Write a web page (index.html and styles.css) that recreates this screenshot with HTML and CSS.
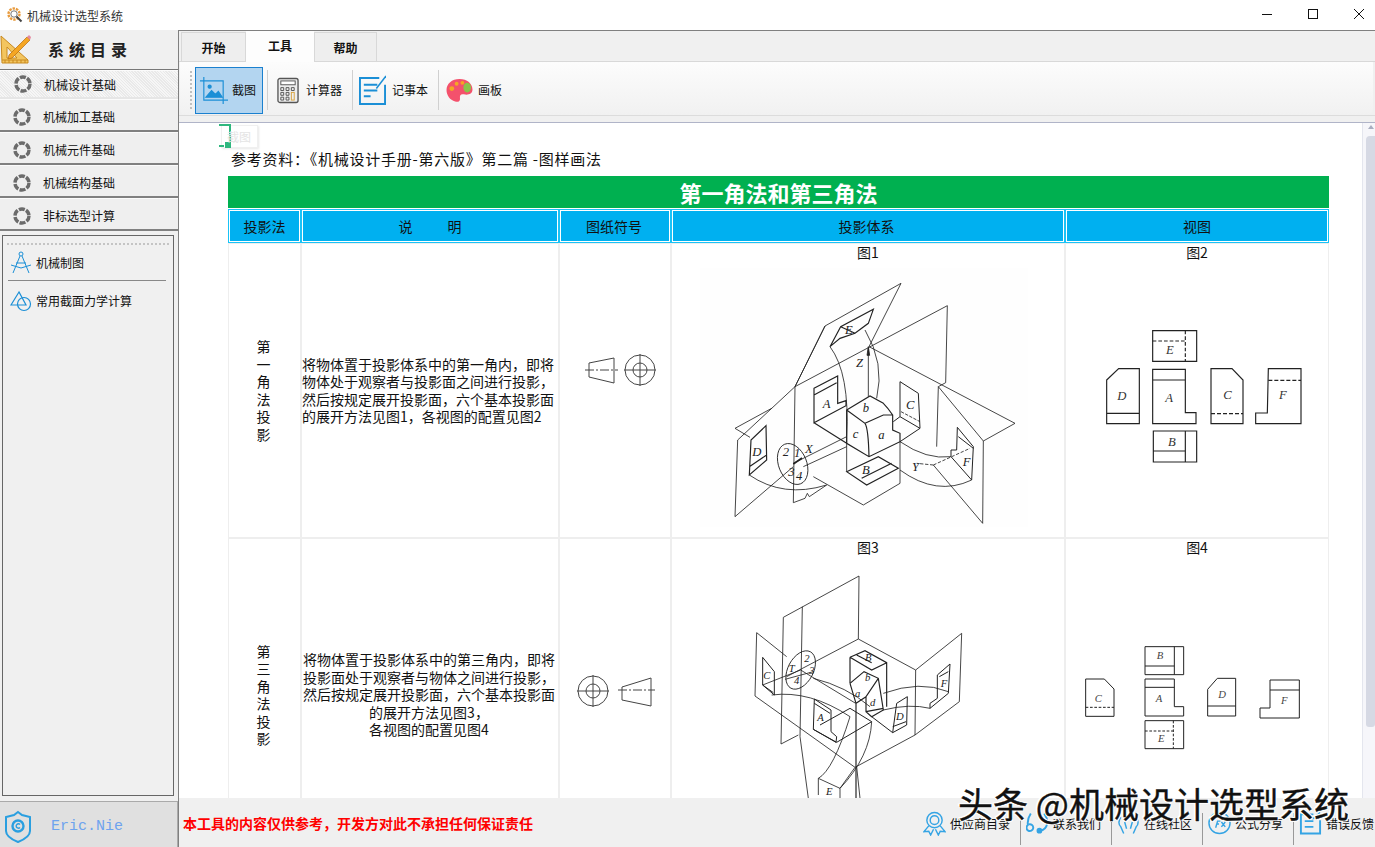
FILE: index.html
```html
<!DOCTYPE html>
<html lang="zh-CN">
<head>
    <meta charset="UTF-8">
    <title>机械设计选型系统</title>
    <link rel="stylesheet" href="styles.css">
</head>
<body>
    <div class="titlebar">
        <svg class="app-icon" viewBox="0 0 16 16">
            <circle cx="7" cy="7" r="5.5" fill="none" stroke="#e89a3c" stroke-width="2.4" stroke-dasharray="2.4 1"/>
            <circle cx="7" cy="7" r="3.2" fill="#fff" stroke="#777" stroke-width="1"/>
            <path d="M9.5 9.5l5 5" stroke="#444" stroke-width="2"/>
        </svg>
        <span class="app-title">机械设计选型系统</span>
        <div class="win-controls">
            <svg class="win-btn" viewBox="0 0 46 30"><path d="M25 14.5h10" stroke="#111" fill="none"/></svg>
            <svg class="win-btn" viewBox="0 0 46 30"><rect x="25.500" y="9.500" width="9" height="9" stroke="#111" fill="none"/></svg>
            <svg class="win-btn" viewBox="0 0 46 30"><path d="M25 9l10 10M35 9l-10 10" stroke="#111" fill="none"/></svg>
        </div>
    </div>

    <div class="app">
        <div class="sidebar">
            <div class="side-head">
                <svg class="side-logo" viewBox="0 0 32 32">
                    <path d="M1 3l27 24v3H2z" fill="#f3c55f" stroke="#c98a1f"/>
                    <path d="M7 14l10 11H7z" fill="#f0f0f0" stroke="#c98a1f"/>
                    <path d="M2 27h26M5 30v-3M9 30v-3M13 30v-3M17 30v-3M21 30v-3M25 30v-3" stroke="#c98a1f" fill="none"/>
                    <path d="M9 22L27 4l3 3-18 18-4 1z" fill="#f5a623" stroke="#b36b10" stroke-width=".7"/>
                    <path d="M27 4l2-2 2 2-1 3z" fill="#e58aa0"/>
                </svg>
                <span class="side-title">系统目录</span>
            </div>
            <div class="nav-item first"><svg class="ring" viewBox="0 0 18 18"><circle cx="9" cy="9" r="7" fill="none" stroke="#6b6b6b" stroke-width="3.4" stroke-dasharray="6 1.4"/></svg><span>机械设计基础</span></div>
            <div class="nav-item"><svg class="ring" viewBox="0 0 18 18"><circle cx="9" cy="9" r="7" fill="none" stroke="#6b6b6b" stroke-width="3.4" stroke-dasharray="6 1.4"/></svg><span>机械加工基础</span></div>
            <div class="nav-item"><svg class="ring" viewBox="0 0 18 18"><circle cx="9" cy="9" r="7" fill="none" stroke="#6b6b6b" stroke-width="3.4" stroke-dasharray="6 1.4"/></svg><span>机械元件基础</span></div>
            <div class="nav-item"><svg class="ring" viewBox="0 0 18 18"><circle cx="9" cy="9" r="7" fill="none" stroke="#6b6b6b" stroke-width="3.4" stroke-dasharray="6 1.4"/></svg><span>机械结构基础</span></div>
            <div class="nav-item"><svg class="ring" viewBox="0 0 18 18"><circle cx="9" cy="9" r="7" fill="none" stroke="#6b6b6b" stroke-width="3.4" stroke-dasharray="6 1.4"/></svg><span>非标选型计算</span></div>

            <div class="side-panel">
                <div class="panel-grip"></div>
                <div class="panel-row">
                    <svg class="panel-icon" viewBox="0 0 22 24" fill="none" stroke="#1b8fd6">
                        <circle cx="11" cy="4" r="2"/><path d="M10 6L3 23M12 6l7 17M1 15l10 3 10-3M6 13h10"/>
                    </svg>
                    <span>机械制图</span>
                </div>
                <div class="panel-line"></div>
                <div class="panel-row">
                    <svg class="panel-icon" viewBox="0 0 22 24" fill="none" stroke="#1b8fd6" stroke-width="1.2">
                        <path d="M9 4L1 17h15z"/><circle cx="14" cy="16" r="6.5"/>
                    </svg>
                    <span>常用截面力学计算</span>
                </div>
            </div>

            <div class="side-foot">
                <svg class="shield" viewBox="0 0 28 34" fill="none" stroke="#2a9fe0" stroke-width="2">
                    <path d="M14 2l4 3 8 2v14c0 6-7 9-12 11C9 30 2 27 2 21V7l8-2z"/>
                    <circle cx="14" cy="16" r="5.5" stroke-width="2.4"/><path d="M16 14.5a2.2 2.2 0 1 0 0 3" stroke-width="1.4"/>
                </svg>
                <span class="author">Eric.Nie</span>
            </div>
        </div>

        <div class="main">
            <div class="tabs">
                <div class="tab">开始</div>
                <div class="tab active">工具</div>
                <div class="tab">帮助</div>
            </div>

            <div class="toolbar">
                <div class="grip"></div>
                <div class="tool selected">
                    <svg class="icon-shot" viewBox="0 0 30 30" fill="none" stroke="#1b8fd6" stroke-width="1.2">
                        <path d="M5 1v24h28M1 5h24v24"/>
                        <path d="M7 22l6-7 4 4 3-3 4 6z" fill="#1b8fd6"/><circle cx="11" cy="11" r="1.6" fill="#1b8fd6"/>
                    </svg>
                    <span>截图</span>
                </div>
                <div class="tool calc">
                    <svg class="icon-calc" viewBox="0 0 23 28" fill="none" stroke="#555">
                        <rect x="1" y="1.500" width="21" height="25" rx="2" fill="#eee" stroke-width="1.4"/>
                        <rect x="4" y="4" width="15" height="4" fill="#fff"/>
                        <path d="M4 11h3v3H4zM9.500 11h3v3h-3zM15 11h3v3h-3zM4 16h3v3H4zM9.500 16h3v3h-3zM4 21h3v3H4zM9.500 21h3v3h-3z"/>
                        <rect x="15" y="16" width="3" height="8" stroke="#d9a441"/>
                    </svg>
                    <span>计算器</span>
                </div>
                <div class="tool note">
                    <svg class="icon-note" viewBox="0 0 28 32" fill="none" stroke="#1b8fd6" stroke-width="2">
                        <path d="M21 3H1v27h26V10M5 10h14M5 16h14M5 22h7"/><path d="M18 14L28 1" stroke-width="1.6"/>
                    </svg>
                    <span>记事本</span>
                </div>
                <div class="tool paint">
                    <svg class="icon-paint" viewBox="0 0 28 26">
                        <path d="M14 1c8 0 13.500 5 13.500 11 0 5-5 6-9 5-3-.8-4.500 1-4 4 .5 3-2 4.500-5 3.500C4 23 .5 18 .5 12.500.5 6 6 1 14 1z" fill="#f4516c"/>
                        <circle cx="6" cy="11" r="2.500" fill="#f5a623"/><circle cx="11" cy="6" r="2" fill="#f5a623"/>
                        <circle cx="17" cy="5" r="2" fill="#f5a623"/><ellipse cx="22" cy="10" rx="4" ry="5" fill="#8bc34a"/>
                    </svg>
                    <span>画板</span>
                </div>
            </div>
            <div class="toolbar-gap"></div>

            <div class="content">
                <div class="float-tip">
                    <svg class="crop-mark" viewBox="0 0 12 24" fill="none" stroke="#2fb77e" stroke-width="2"><path d="M0 1h11v21M0 22h5"/><rect x="7" y="19" width="5" height="4" fill="#2fb77e"/></svg>
                    <span>截图</span>
                </div>
                <div class="doc">
                    <p class="ref-note">参考资料：《机械设计手册-第六版》第二篇 -图样画法</p>
                    <table class="sheet">
                        <colgroup>
                            <col class="c1"><col class="c2"><col class="c3"><col class="c4"><col class="c5">
                        </colgroup>
                        <tr><td class="sheet-title" colspan="5">第一角法和第三角法</td></tr>
                        <tr class="gap-row"><td colspan="5"></td></tr>
                        <tr class="head-row">
                            <td>投影法</td>
                            <td>说&emsp;&emsp;&ensp;明</td>
                            <td>图纸符号</td>
                            <td>投影体系</td>
                            <td>视图</td>
                        </tr>
                        <tr class="row-a">
                            <td class="txt">第<br>一<br>角<br>法<br>投<br>影</td>
                            <td class="txt left">将物体置于投影体系中的第一角内，即将物体处于观察者与投影面之间进行投影，然后按规定展开投影面，六个基本投影面的展开方法见图1，各视图的配置见图2</td>
                            <td class="pic">
                                <svg class="symbol" viewBox="560 244 110 292" fill="none" stroke="#444" stroke-width="1">
                                    <path d="M589 363l25-5v25l-25-6z"/><path d="M585 370h33" stroke-dasharray="9 2 2 2"/>
                                    <circle cx="640" cy="370" r="15"/><circle cx="640" cy="370" r="7"/><path d="M624 370h32M640 354v32"/>
                                </svg>
                            </td>
                            <td class="pic fig">
                                <div class="cap">图1</div>
                                <svg class="fig-wide" viewBox="6 66 1176 822" fill="none" stroke="#222" stroke-width="2.500">
                                    <rect x="90" y="85" width="985" height="775" fill="#fefefe" stroke="none"/>
                                    <path d="M240 592L195 565L305 505M203 600L375 440L832 197L827 428L805 440L940 603L1035 550L597 320M465 258L375 440L370 788L405 775L412 760L418 770L470 735M375 440L465 258L693 130L597 320"/>
                                    <path d="M203 600L195 830L370 680M805 440L800 620M940 603L938 850L790 675M430 710L580 795L690 730V605M530 590L530 695M370 670L530 590M400 680L530 620"/>
                                    <path d="M595 470V325"/><path d="M595 320l-4 26h8z" fill="#222"/>
                                    <path d="M530 510L600 468L640 490Q655 505 668 525V570L690 580V605L597 650L530 610ZM530 510L585 550Q595 565 597 650M585 550L640 525H668" stroke-width="3.500"/>
                                    <path d="M432 445L503 408V490L528 482V497L432 548ZM432 465L500 428M432 548L530 610" stroke-width="3.500"/>
                                    <path d="M690 425L745 460L750 565L690 530ZM670 545L690 530M750 565L690 605" stroke-width="3"/><path d="M693 515L750 545" stroke-dasharray="10 4"/>
                                    <path d="M288 557L243 600L238 705L290 660ZM238 680L290 645" stroke-width="3.500"/>
                                    <path d="M480 320L512 260L610 208L595 250L555 280L510 295ZM512 260L555 280" stroke-width="3.500"/>
                                    <path d="M862 562L910 620L905 720L843 650V630L860 630ZM865 590L910 625" stroke-width="3"/>
                                    <path d="M530 695L625 650L685 685L590 735ZM575 715L665 670" stroke-width="3.500"/>
                                    <ellipse cx="368" cy="672" rx="42" ry="64" transform="rotate(-22 368 672)"/>
                                    <path d="M370 672l26-18" stroke-width="5"/><path d="M790 675l-50 -5M790 675L900 625" stroke-dasharray="10 5"/>
                                    <path d="M238 705Q340 775 470 735M690 605Q770 660 843 650M690 690Q800 770 905 720M480 320Q540 400 530 590M585 270Q645 370 620 475"/>
                                    <g class="fig-label" fill="#222" stroke="none" font-size="38">
                                        <text x="525" y="282">E</text><text x="558" y="382">Z</text><text x="458" y="505">A</text><text x="708" y="507">C</text><text x="578" y="515">b</text><text x="548" y="595">c</text><text x="625" y="597">a</text><text x="247" y="648">D</text><text x="338" y="648">2</text><text x="372" y="650">1</text><text x="405" y="638">X</text><text x="378" y="720">4</text><text x="355" y="708">3</text><text x="576" y="702">B</text><text x="726" y="692">Y</text><text x="878" y="678">F</text>
                                    </g>
                                </svg>
                            </td>
                            <td class="pic fig">
                                <div class="cap">图2</div>
                                <svg class="fig-narrow" viewBox="18 66 786 822" fill="none" stroke="#222" stroke-width="3.500">
                                    <path d="M278 272H410V364H278Z"/><path d="M278 303H376M376 272V364" stroke-dasharray="11 6"/>
                                    <path d="M140 420L176 386H238V551H140ZM140 520H238"/>
                                    <path d="M278 388H376V518H408V551H278ZM278 420H376"/>
                                    <path d="M453 386H516L549 420V551H453Z"/><path d="M453 521H549" stroke-dasharray="12 6"/>
                                    <path d="M625 386H723V551H587V519H622Z"/><path d="M625 421H723" stroke-dasharray="12 6"/>
                                    <path d="M280 573H410V666H280ZM280 633H376M376 573V666"/>
                                    <g class="fig-label" fill="#333" stroke="none" font-size="38">
                                        <text x="318" y="343">E</text><text x="172" y="479">D</text><text x="316" y="487">A</text><text x="490" y="476">C</text><text x="657" y="476">F</text><text x="324" y="617">B</text>
                                    </g>
                                </svg>
                            </td>
                        </tr>
                        <tr class="row-b">
                            <td class="txt">第<br>三<br>角<br>法<br>投<br>影</td>
                            <td class="txt">将物体置于投影体系中的第三角内，即将投影面处于观察者与物体之间进行投影，然后按规定展开投影面，六个基本投影面的展开方法见图3，<br>各视图的配置见图4</td>
                            <td class="pic">
                                <svg class="symbol" viewBox="560 539 110 312" fill="none" stroke="#444" stroke-width="1">
                                    <circle cx="593" cy="691" r="15"/><circle cx="593" cy="691" r="7"/><path d="M577 691h32M593 675v32"/>
                                    <path d="M622 687l29-9v28l-29-6z"/><path d="M618 690h37" stroke-dasharray="9 2 2 2"/>
                                </svg>
                            </td>
                            <td class="pic fig">
                                <div class="cap">图3</div>
                                <svg class="fig-wide tall" viewBox="6 51 1176 882" fill="none" stroke="#222" stroke-width="2.500">
                                    <path d="M340 232L567 108L565 297M340 232L333 612L385 585M397 200L390 590L415 775M260 278L350 350M260 278L255 468L555 682L735 585L737 390L875 280L868 485L735 585M565 297L737 390M565 297L350 410"/>
                                    <ellipse cx="392" cy="390" rx="38" ry="62" transform="rotate(28 392 390)"/>
                                    <path d="M540 352L585 332L650 368V500M540 352V430M540 352L605 390L650 368M560 345L605 368" stroke-width="3.500"/>
                                    <path d="M540 430L582 395L625 415L640 510L605 530L588 515V470L625 415M540 430L558 490L588 470M558 490V775M588 515L640 505" stroke-width="3.500"/>
                                    <path d="M433 477L483 510V575L500 590L498 607L430 568ZM433 490L480 520M430 568L500 607L605 545L540 505L450 555" stroke-width="3"/>
                                    <path d="M278 352L313 395V465L278 435ZM278 435L310 458" stroke-width="3"/>
                                    <path d="M712 470L680 490L668 578L710 555ZM668 560L708 545M605 530L668 578" stroke-width="3"/>
                                    <path d="M840 372L802 405V475L780 490V505L835 460ZM808 410L835 395" stroke-width="3"/>
                                    <path d="M445 715L510 745V780M445 715V765M445 715Q490 690 540 530M510 745Q600 650 605 545M555 682L510 745M560 680L570 775"/>
                                    <path d="M278 435L392 390L557 490M305 465Q420 450 540 530M430 415Q530 440 600 500M640 460Q750 420 835 455M640 510Q720 490 780 505M345 418L430 395"/>
                                    <g class="fig-label" fill="#222" stroke="none" font-size="32">
                                        <text x="585" y="364">B</text><text x="280" y="416">C</text><text x="356" y="396">T</text><text x="403" y="366">2</text><text x="418" y="402">3</text><text x="372" y="432">4</text><text x="585" y="424">b</text><text x="555" y="472">a</text><text x="600" y="498">d</text><text x="442" y="542">A</text><text x="678" y="541">D</text><text x="812" y="442">F</text><text x="468" y="765">E</text>
                                    </g>
                                </svg>
                            </td>
                            <td class="pic fig">
                                <div class="cap">图4</div>
                                <svg class="fig-narrow tall" viewBox="18 51 786 882" fill="none" stroke="#222" stroke-width="3">
                                    <path d="M255 320H371V404H255ZM255 378H343M343 320V404"/>
                                    <path d="M77 417H133L162 447V529H77Z"/><path d="M77 502H162" stroke-dasharray="8 5"/>
                                    <path d="M255 417H343V500H371V528H255ZM255 442H343"/>
                                    <path d="M443 448L472 415H527V528H443ZM443 498H527"/>
                                    <path d="M630 420H718V534H600V504H630ZM630 450H718"/>
                                    <path d="M255 542H371V626H255Z"/><path d="M255 573H340M340 542V626" stroke-dasharray="8 5"/>
                                    <g class="fig-label" fill="#444" stroke="none" font-size="32">
                                        <text x="290" y="356">B</text><text x="104" y="486">C</text><text x="287" y="486">A</text><text x="475" y="474">D</text><text x="663" y="491">F</text><text x="294" y="607">E</text>
                                    </g>
                                </svg>
                            </td>
                        </tr>
                    </table>
                </div>
                <div class="scrollbar"><div class="sb-arrow"></div><div class="thumb"></div></div>
            </div>

            <div class="statusbar">
                <span class="disclaimer">本工具的内容仅供参考，开发方对此不承担任何保证责任</span>
                <div class="links">
                    <div class="link">
                        <svg class="link-icon" viewBox="0 0 24 25" fill="none" stroke="#35a4e4" stroke-width="1.500">
                            <circle cx="12" cy="9" r="8"/><circle cx="12" cy="9" r="4.500"/><path d="M6 15L1 21l5-.5 2 4 3-6M18 15l5 6-5-.5-2 4-3-6"/>
                        </svg>
                        <span>供应商目录</span>
                    </div>
                    <div class="link">
                        <svg class="link-icon" viewBox="0 0 24 25" fill="none" stroke="#35a4e4" stroke-width="2">
                            <path d="M5 2Q1 8 2 14a3.500 3.500 0 1 0 1-.5M19 2q4 6 3 11a9 9 0 0 1-7 7"/><circle cx="14" cy="20" r="2" fill="#35a4e4"/>
                        </svg>
                        <span>联系我们</span>
                    </div>
                    <div class="link">
                        <svg class="link-icon" viewBox="0 0 24 25" fill="none" stroke="#35a4e4" stroke-width="1.500">
                            <path d="M7 3q5 6 10 0M4 6Q0 12 4 16l3 7M20 6q4 6 0 10l-3 7M8 11l2 7M16 11l-2 7"/>
                        </svg>
                        <span>在线社区</span>
                    </div>
                    <div class="link">
                        <svg class="link-icon" viewBox="0 0 24 25" fill="none" stroke="#35a4e4" stroke-width="1.500">
                            <circle cx="12" cy="12" r="11"/><path d="M8 17l2-7h3M8.500 13h3M14 11l4 5M18 11l-4 5"/>
                        </svg>
                        <span>公式分享</span>
                    </div>
                    <div class="link last">
                        <svg class="link-icon" viewBox="0 0 24 25" fill="none" stroke="#35a4e4" stroke-width="2">
                            <path d="M15 3H2v20h20V9M6 10h9M6 16h9"/><path d="M14 8l8-7" stroke-width="1.500"/>
                        </svg>
                        <span>错误反馈</span>
                    </div>
                </div>
            </div>
        </div>
    </div>

    <div class="watermark">头条 @机械设计选型系统</div>
</body>
</html>
```

FILE: styles.css
```css
* {
    box-sizing: border-box;
}
html, body {
    height: 100%;
}
body {
    margin: 0;
    overflow: hidden;
    display: flex;
    flex-direction: column;
    font-family: "Noto Sans CJK SC", "Liberation Sans", sans-serif;
    font-size: 12px;
    color: #111;
    background: #f0f0f0;
}
svg {
    display: block;
    flex: none;
}

/* window title */
.titlebar {
    height: 30px;
    flex: none;
    display: flex;
    align-items: center;
    padding-left: 7px;
    background: #fff;
}
.app-icon {
    width: 16px;
    height: 16px;
    margin-right: 4px;
}
.app-title {
    color: #333;
}
.win-controls {
    margin-left: auto;
    display: flex;
}
.win-btn {
    width: 46px;
    height: 30px;
}

.app {
    flex: 1;
    min-height: 0;
    display: flex;
}

/* left column */
.sidebar {
    width: 178px;
    flex: none;
    display: flex;
    flex-direction: column;
    background: #f0f0f0;
}
.side-head {
    height: 40px;
    flex: none;
    display: flex;
    align-items: center;
    gap: 16px;
    padding-bottom: 2px;
    border-bottom: 1px solid #777;
}
.side-logo {
    width: 32px;
    height: 32px;
}
.side-title {
    font-size: 16px;
    font-weight: bold;
    letter-spacing: 5px;
    color: #222;
}
.nav-item {
    height: 33px;
    flex: none;
    display: flex;
    align-items: center;
    gap: 12px;
    padding: 3px 0 0 13px;
    border-top: 1px solid #fbfbfb;
    border-bottom: 2px solid #808080;
    background: #efefef;
}
.nav-item.first {
    height: 29px;
    padding: 0 0 0 14px;
    border-bottom: 2px solid #e6e6e6;
    background: repeating-linear-gradient(45deg, #f6f6f6 0 1px, #e9e9e9 1px 2px);
}
.ring {
    width: 18px;
    height: 18px;
}
.side-panel {
    flex: 1;
    margin: 4px 4px 5px 2px;
    padding: 7px 4px 0 4px;
    border: 1px solid #666;
    background: #f0f0f0;
}
.panel-grip {
    border-top: 2px dotted #c4c4c4;
    margin-bottom: 2px;
}
.panel-row {
    height: 30px;
    display: flex;
    align-items: center;
    gap: 4px;
    padding-left: 3px;
}
.panel-icon {
    width: 22px;
    height: 24px;
}
.panel-line {
    border-top: 1px solid #888;
    margin: 3px 3px 4px 1px;
}
.side-foot {
    height: 46px;
    flex: none;
    display: flex;
    align-items: center;
    gap: 19px;
    padding: 4px 0 0 4px;
    background: #e0e0e0;
    border-top: 1px solid #aaa;
    border-right: 1px solid #aaa;
}
.shield {
    width: 28px;
    height: 34px;
}
.author {
    font-family: "Liberation Mono", monospace;
    font-size: 15px;
    color: #6ea3ee;
}

/* right side */
.main {
    flex: 1;
    min-width: 0;
    display: flex;
    flex-direction: column;
    border-left: 1px solid #808080;
    border-top: 1px solid #808080;
}
.tabs {
    height: 31px;
    flex: none;
    display: flex;
    align-items: flex-end;
    padding-left: 2px;
    border-bottom: 1px solid #d8d8d8;
}
.tab {
    width: 65px;
    height: 29px;
    display: flex;
    align-items: center;
    justify-content: center;
    font-weight: bold;
    color: #111;
    background: #eeeeee;
    border: 1px solid #d8d8d8;
    border-bottom: 0;
}
.tab:last-child {
    width: 63px;
}
.tab.active {
    width: 68px;
    height: 31px;
    margin-bottom: -1px;
    padding-bottom: 3px;
    background: #fdfdfd;
    border-color: #fdfdfd;
}
.toolbar {
    height: 53px;
    flex: none;
    display: flex;
    align-items: center;
    padding: 3px 0 0 10px;
    margin: 0 2px 0 1px;
    border-radius: 0 0 6px 6px;
    background: linear-gradient(#fcfcfc, #f1f1f1);
}
.grip {
    width: 2px;
    height: 38px;
    margin-right: 3px;
    border-left: 2px dotted #c0c0c0;
}
.tool {
    height: 40px;
    display: flex;
    align-items: center;
    border-left: 1px solid #d0d0d0;
}
.tool span {
    margin-bottom: 2px;
}
.tool.selected {
    width: 68px;
    height: 47px;
    padding-left: 3px;
    gap: 4px;
    margin-right: 4px;
    background: #b3d5f0;
    border: 1px solid #1a80cf;
}
.tool.calc {
    width: 85px;
    padding-left: 9px;
    gap: 7px;
}
.tool.note {
    width: 86px;
    padding-left: 6px;
    gap: 6px;
}
.tool.paint {
    padding-left: 7px;
    gap: 5px;
}
.icon-shot {
    width: 29px;
    height: 29px;
}
.icon-calc {
    width: 22px;
    height: 27px;
}
.icon-note {
    width: 27px;
    height: 31px;
}
.icon-paint {
    width: 27px;
    height: 25px;
}
.toolbar-gap {
    height: 8px;
    flex: none;
    border-bottom: 1px solid #b0b4c8;
    box-shadow: inset 0 1px 0 #dcdcdc;
}
.content {
    flex: 1;
    min-height: 0;
    display: flex;
    position: relative;
    background: #fff;
    overflow: hidden;
}
.doc {
    flex: 1;
    min-width: 0;
    padding: 27px 0 0 49px;
    font-size: 14px;
}
.ref-note {
    margin: 0 0 9px 3px;
    font-size: 15px;
    line-height: 17px;
    letter-spacing: .75px;
    color: #111;
}
.float-tip {
    position: absolute;
    left: 42px;
    top: 2px;
    width: 37px;
    height: 23px;
    display: flex;
    align-items: center;
    background: #fff;
    border: 1px solid #f0f0f0;
    box-shadow: 1px 1px 2px #e8e8e8;
    color: #e4e4e4;
}
.crop-mark {
    width: 12px;
    height: 24px;
    margin: -2px -4px 0 -3px;
}
.sheet {
    width: 1101px;
    table-layout: fixed;
    border-collapse: separate;
    border-spacing: 0;
}
.c1 { width: 73px; }
.c2 { width: 258px; }
.c3 { width: 112px; }
.c4 { width: 394px; }
.c5 { width: 264px; }
.sheet td {
    padding: 0;
}
.sheet .sheet-title {
    height: 32px;
    text-align: center;
    vertical-align: middle;
    font-size: 22px;
    line-height: 30px;
    font-weight: bold;
    color: #fff;
    background: #00b050;
}
.sheet .gap-row td {
    height: 1px;
    line-height: 0;
    font-size: 0;
}
.head-row td {
    height: 34px;
    text-align: center;
    vertical-align: middle;
    background: #00b0f0;
    border: 1px solid #19c3f7;
    box-shadow: inset 0 0 0 1px #fff;
}
.sheet .head-row td:nth-child(3) {
    padding-right: 2px;
}
.sheet .head-row td:nth-child(4) {
    padding-right: 3px;
}
.row-a td, .row-b td {
    border: 1px solid #eeeeee;
}
.row-a td {
    height: 295px;
}
.row-b td {
    height: 314px;
}
.txt {
    text-align: center;
    vertical-align: middle;
    line-height: 17.5px;
}
.sheet td.txt {
    padding-right: 2px;
}
.txt.left {
    text-align: left;
}
.pic {
    vertical-align: top;
}
.cap {
    height: 18px;
    line-height: 16px;
    text-align: center;
}
.symbol {
    width: 110px;
    height: 292px;
}
.row-b .symbol {
    height: 312px;
}
.fig-wide {
    width: 392px;
    height: 274px;
}
.fig-wide.tall {
    height: 294px;
}
.fig-narrow {
    width: 262px;
    height: 274px;
}
.fig-narrow.tall {
    height: 294px;
}
.fig-label {
    font-family: "Liberation Serif", serif;
    font-style: italic;
}
.scrollbar {
    width: 13px;
    flex: none;
    padding-left: 3px;
    border-left: 1px solid #e4e6ee;
    background: #f6f6fa;
}
.sb-arrow {
    width: 0;
    height: 0;
    margin: 2px 0 7px 2px;
    border: 3px solid transparent;
    border-top: 0;
    border-bottom: 4px solid #a8adc0;
}
.thumb {
    height: 591px;
    background: #d6d9e4;
    border-radius: 4px 0 3px 3px;
}

/* bottom bar */
.statusbar {
    height: 49px;
    flex: none;
    display: flex;
    background: #f0f0f0;
}
.disclaimer {
    align-self: center;
    margin-left: 4px;
    font-size: 14px;
    font-weight: bold;
    color: #f00;
}
.links {
    margin-left: auto;
    display: flex;
    align-items: flex-end;
}
.link {
    height: 32px;
    display: flex;
    align-items: flex-start;
    gap: 4px;
    padding: 0 10px 0 5px;
    margin-bottom: 2px;
    border-right: 1px solid #999;
    line-height: 22px;
}
.link.last {
    padding-right: 1px;
    border-right: 0;
}
.link-icon {
    width: 23px;
    height: 25px;
    margin-top: -2px;
}

/* site mark printed over the shot */
.watermark {
    position: absolute;
    left: 958px;
    top: 781px;
    font-size: 35px;
    line-height: 44px;
    white-space: nowrap;
    color: #111;
    -webkit-text-stroke: .4px #111;
    text-shadow: -2px -1px 0 #fff, 1px 1px 0 #fff, 1px -1px 0 #fff, -1px 1px 0 #fff;
}
```
